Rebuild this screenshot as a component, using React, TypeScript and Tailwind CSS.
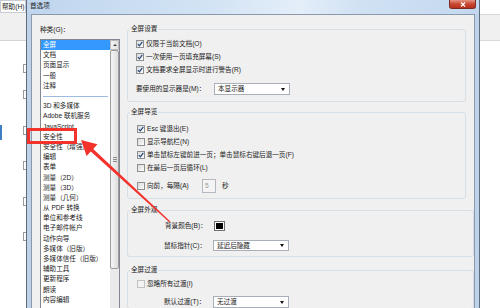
import { FC, ReactNode } from 'react';

const LIST = [
    '全屏',
    '文档',
    '页面显示',
    '一般',
    '注释',
    '-',
    '3D 和多媒体',
    'Adobe 联机服务',
    'JavaScript',
    '安全性',
    '安全性（增强）',
    '编辑',
    '表单',
    '测量（2D）',
    '测量（3D）',
    '测量（几何）',
    '从 PDF 转换',
    '单位和参考线',
    '电子邮件帐户',
    '动作向导',
    '多媒体（旧版）',
    '多媒体信任（旧版）',
    '辅助工具',
    '更新程序',
    '朗读',
    '内容编辑',
];

const Check: FC<{ on?: boolean; dim?: boolean }> = ({ on, dim }) => (
    <span
        className={`flex h-[8px] w-[8px] shrink-0 items-center justify-center border ${dim ? 'border-[#c2c2c2] bg-[#f3f3f3]' : 'border-[#8e8f8f] bg-[linear-gradient(135deg,#dadada,#fdfdfd)]'}`}
    >
        {on && (
            <svg viewBox="0 0 6 6" className="h-[6px] w-[6px]">
                <path
                    d="M0.8 3.1 2.4 4.8 5.3 0.9"
                    fill="none"
                    stroke="#22467c"
                    strokeWidth="1.2"
                />
            </svg>
        )}
    </span>
);

const CheckRow: FC<{ on?: boolean; dim?: boolean; children: ReactNode }> = ({
    on,
    dim,
    children,
}) => (
    <div className="flex h-[13px] items-center gap-[2px] whitespace-nowrap">
        <Check on={on} dim={dim} />
        <span>{children}</span>
    </div>
);

const Combo: FC<{ text: string; tall?: boolean }> = ({ text, tall }) => (
    <div
        className={`flex w-[76px] items-center justify-between border border-[#a9afb8] bg-white pl-[3px] pr-[4px] ${tall ? 'h-[12px]' : 'h-[11px]'}`}
    >
        <span>{text}</span>
        <span className="h-0 w-0 border-x-[2.5px] border-t-[3px] border-x-transparent border-t-[#111]" />
    </div>
);

const Group: FC<{ title: string; className: string; inner: string; children: ReactNode }> = ({
    title,
    className,
    inner,
    children,
}) => (
    <fieldset className={`w-[339px] rounded-[3px] border border-[#d5dfe5] ${className}`}>
        <legend className="ml-[2px] px-[1px] leading-[10px]">{title}</legend>
        <div className={inner}>{children}</div>
    </fieldset>
);

const Marker: FC<{ mt: string }> = ({ mt }) => (
    <span className={`h-[9px] w-[3px] border border-r-0 border-[#9a9a9a] ${mt}`} />
);

export default function App() {
    return (
        <div className="relative flex h-[308px] w-[500px] overflow-hidden bg-white font-['Liberation_Sans','Noto_Sans_CJK_SC',sans-serif] text-[6.6px] leading-[10px] text-[#1a1a1a]">
            {/* app behind, left */}
            <div className="flex w-[26px] shrink-0 flex-col">
                <div className="flex h-[13px] items-center whitespace-nowrap border border-[#c8ccd2] bg-[#fbfcfd] pl-[1px]">
                    帮助(H)
                </div>
                <div className="h-[28px] border-b border-[#d5d5d5] bg-[#f0f0f0]" />
                <div className="flex flex-1 justify-between">
                    <div className="mt-[84px] h-[15px] w-[2px] bg-[#3d7fc0]" />
                    <div className="flex flex-col">
                        <Marker mt="mt-[23px]" />
                        <Marker mt="mt-[17px]" />
                        <Marker mt="mt-[27px]" />
                        <Marker mt="mt-[26px]" />
                        <Marker mt="mt-[27px]" />
                        <Marker mt="mt-[26px]" />
                    </div>
                </div>
            </div>

            {/* dialog */}
            <div className="flex w-[454px] shrink-0 flex-col border-x border-[#5d6d7e] bg-[#bed3ea]">
                <div className="flex h-[14px] shrink-0 items-start justify-between bg-[linear-gradient(to_right,#c0d6ee_0%,#d2e3f4_40%,#e4eef9_60%,#d0e1f3_74%,#c3d8ef_100%)]">
                    <span className="pl-[3px] pt-[1px] text-[#1e1e1e]">首选项</span>
                    <div className="mr-[3px] flex h-[9px] w-[27px] items-center justify-center rounded-b-[3px] border border-t-0 border-[#7b2b22] bg-[linear-gradient(#e49484,#c94630_50%,#b7321d)]">
                        <svg viewBox="0 0 7 6" className="h-[5px] w-[6px]">
                            <path d="M1 0.6 6 5.4M6 0.6 1 5.4" stroke="white" strokeWidth="1.4" />
                        </svg>
                    </div>
                </div>

                <div className="flex min-h-0 flex-1 px-[4px]">
                    <div className="flex min-w-0 flex-1 items-start overflow-hidden border border-b-0 border-[#8a99ab] bg-[#f0f0f0]">
                        {/* categories */}
                        <div className="ml-[8px] flex h-full w-[80px] shrink-0 flex-col">
                            <div className="mt-[10px] h-[10px] whitespace-nowrap">种类(G)：</div>
                            <div className="mt-[4px] flex min-h-0 flex-1 border border-b-0 border-[#828790] bg-white">
                                <div className="flex w-[69px] flex-col overflow-hidden">
                                    {LIST.map((it) =>
                                        it === '-' ? (
                                            <div key="sep" className="flex h-[10.2px] shrink-0 items-center px-[2px]">
                                                <div className="h-px w-full bg-[#9dbbe0]" />
                                            </div>
                                        ) : (
                                            <div
                                                key={it}
                                                className={`flex h-[10.2px] shrink-0 items-center whitespace-nowrap pl-[2px] ${it === '全屏' ? 'bg-[#3399ff] text-white' : ''}`}
                                            >
                                                {it}
                                            </div>
                                        ),
                                    )}
                                </div>
                                <div className="flex w-[9px] flex-col bg-[#eaeaea]">
                                    <div className="flex h-[10px] items-center justify-center rounded-[1px] border border-[#b8b8b8] bg-[linear-gradient(to_right,#f4f4f4,#e2e2e2)]">
                                        <span className="h-0 w-0 border-x-[2px] border-b-[2.5px] border-x-transparent border-b-[#444]" />
                                    </div>
                                    <div className="flex h-[219px] flex-col items-center justify-center gap-px rounded-[2px] border border-[#9c9c9c] bg-[linear-gradient(to_right,#f5f5f5,#dedede)]">
                                        <span className="h-px w-[4px] bg-[#8a8a8a]" />
                                        <span className="h-px w-[4px] bg-[#8a8a8a]" />
                                        <span className="h-px w-[4px] bg-[#8a8a8a]" />
                                    </div>
                                </div>
                            </div>
                        </div>

                        {/* settings */}
                        <div className="ml-[7px] flex shrink-0 flex-col">
                            <Group title="全屏设置" className="mt-[9px]" inner="pb-[6px] pl-[8px] pt-[3.5px]">
                                <CheckRow on>仅限于当前文档(O)</CheckRow>
                                <CheckRow on>一次使用一页填充屏幕(S)</CheckRow>
                                <CheckRow on>文档要求全屏显示时进行警告(R)</CheckRow>
                                <div className="mt-[6.5px] flex items-center">
                                    <span className="w-[78px] whitespace-nowrap">要使用的显示器是(M)：</span>
                                    <Combo text="本显示器" tall />
                                </div>
                            </Group>

                            <Group title="全屏导览" className="mt-[5px]" inner="pb-[5px] pl-[9px] pt-[5.5px]">
                                <CheckRow on>Esc 键退出(E)</CheckRow>
                                <CheckRow>显示导航栏(N)</CheckRow>
                                <CheckRow on>单击鼠标左键前进一页；单击鼠标右键后退一页(F)</CheckRow>
                                <CheckRow>在最后一页后循环(L)</CheckRow>
                                <div className="mt-[4.5px] flex h-[14px] items-center whitespace-nowrap">
                                    <Check />
                                    <span className="ml-[2px] w-[55px]">向前，每隔(A)</span>
                                    <div className="flex h-[14px] w-[14px] items-center border border-[#b5b9bf] bg-[#f4f4f4] pl-[2px] text-[#9a9a9a]">
                                        5
                                    </div>
                                    <span className="ml-[6px]">秒</span>
                                </div>
                            </Group>

                            <Group title="全屏外观" className="mt-[6px] w-[347px]" inner="pb-[5px] pl-[36px] pt-[5.5px]">
                                <div className="flex h-[11px] items-center">
                                    <span className="ml-[1px] w-[49px] whitespace-nowrap">背景颜色(B)：</span>
                                    <div className="flex h-[10px] w-[11px] border border-[#6e6e6e] bg-white p-[1px]">
                                        <div className="flex-1 bg-black" />
                                    </div>
                                </div>
                                <div className="mt-[8.5px] flex items-center">
                                    <span className="w-[49px] whitespace-nowrap">鼠标指针(C)：</span>
                                    <Combo text="延迟后隐藏" />
                                </div>
                            </Group>

                            <Group title="全屏过渡" className="mt-[8px] w-[347px]" inner="pl-[9px] pt-[3px]">
                                <div className="flex h-[12px] items-center gap-[2px] whitespace-nowrap">
                                    <Check dim />
                                    <span>忽略所有过渡(I)</span>
                                </div>
                                <div className="ml-[27px] mt-[6px] flex items-center">
                                    <span className="w-[49px] whitespace-nowrap">默认过渡(T)：</span>
                                    <Combo text="无过渡" tall />
                                </div>
                            </Group>
                        </div>
                    </div>
                </div>
            </div>

            {/* app behind, right */}
            <div className="flex w-[20px] shrink-0 flex-col">
                <div className="h-[14px] bg-white" />
                <div className="h-[27px] border-y border-[#d9d9d9] bg-[#f0f0f0]" />
                <div className="flex-1 bg-white" />
            </div>

            {/* annotation */}
            <svg className="pointer-events-none absolute inset-0" width="500" height="308" viewBox="0 0 500 308">
                <rect x="28.5" y="129.5" width="47" height="13" fill="none" stroke="#f2322b" strokeWidth="3" />
                <polygon
                    points="81,140 97.4,144.3 93.2,148.9 170.4,221.6 169.6,222.4 90.8,151.5 86.6,156.1"
                    fill="#f2322b"
                />
            </svg>
        </div>
    );
}
